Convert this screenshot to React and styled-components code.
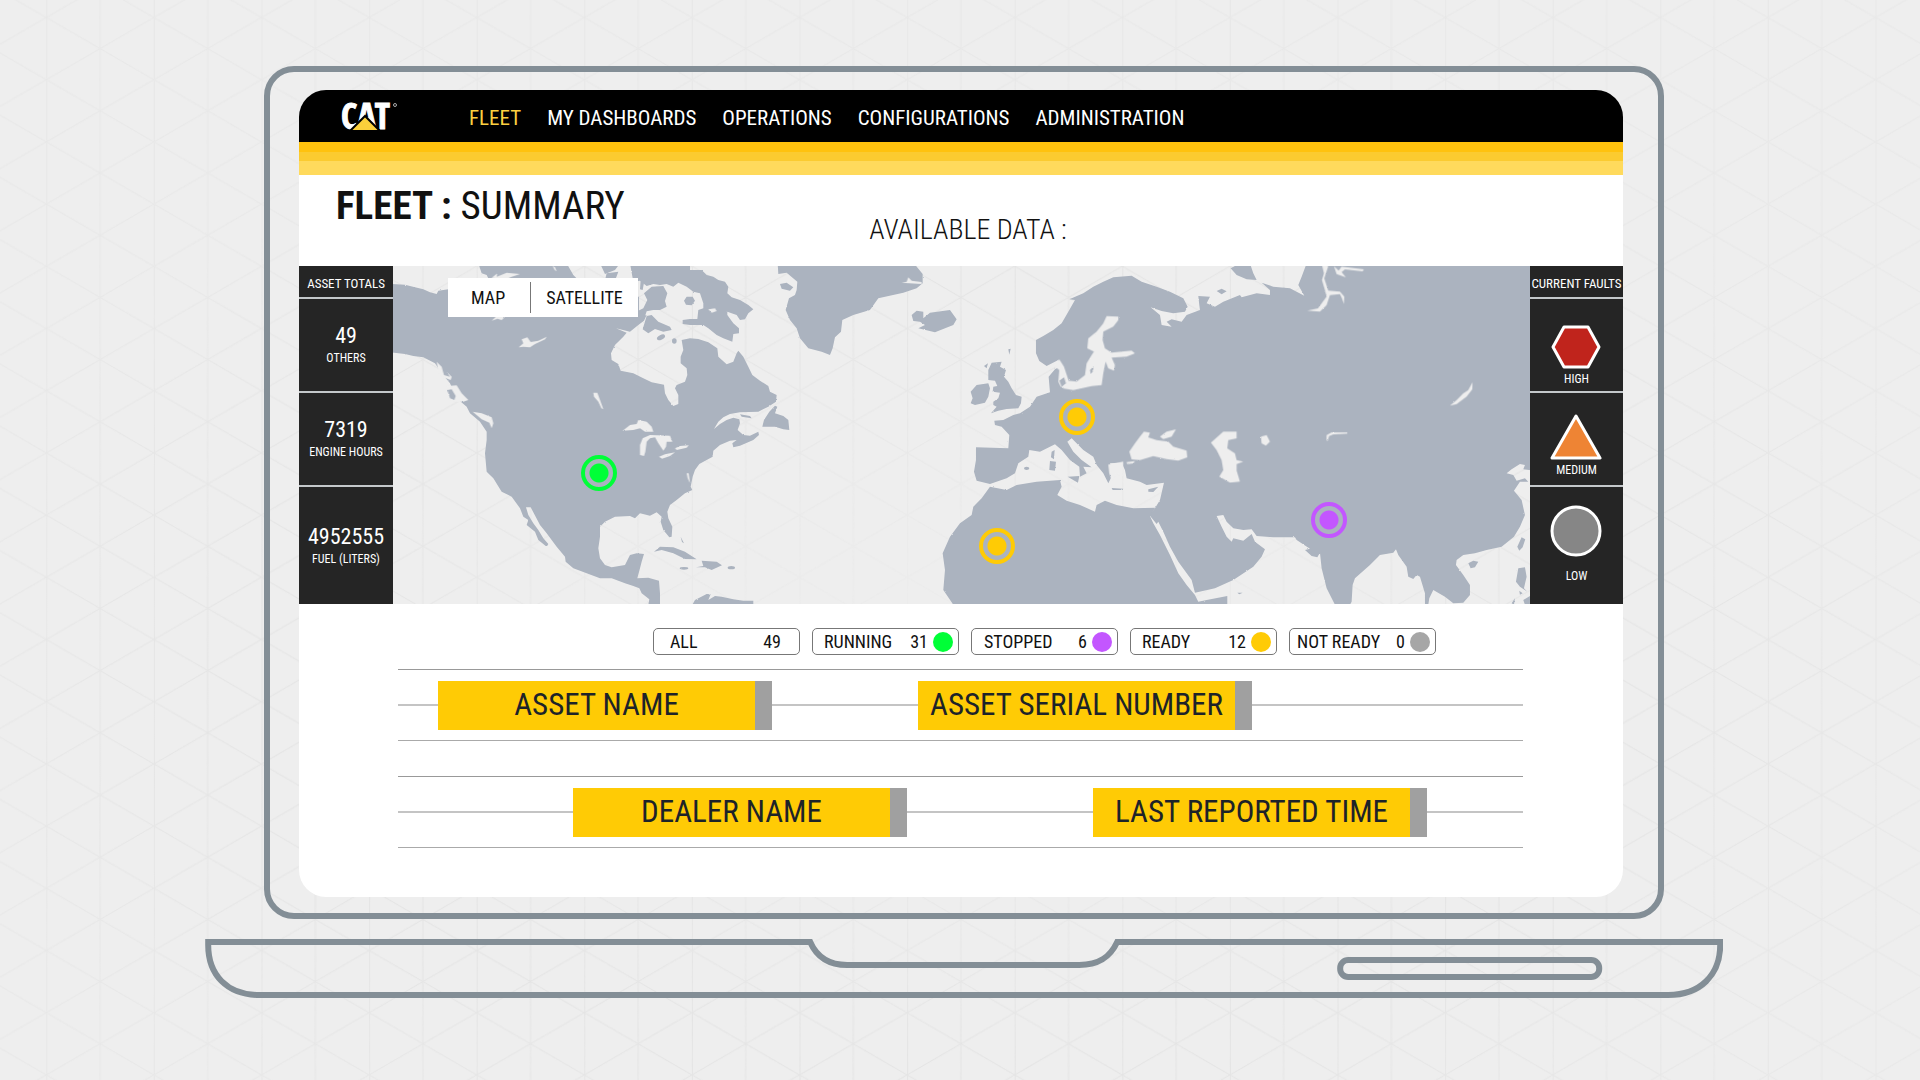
import React, { useState } from "react";
import styled, { createGlobalStyle } from "styled-components";

const steel = "#838e96";
const yellow = "#ffcb05";
const sea = "#eeeeee";
const land = "#abb3bf";

const GlobalStyle = createGlobalStyle`
  * { box-sizing: border-box; }
  body {
    margin: 0;
    background: ${sea};
    font-family: "Roboto Condensed", "Open Sans Condensed", Roboto, sans-serif;
    color: #111;
  }
  button { font: inherit; color: inherit; cursor: pointer; }
`;

const Stage = styled.div`
  display: grid;
  min-height: 100vh;
  > * { grid-area: 1 / 1; }
`;

const Backdrop = styled.svg`
  display: block;
  width: 100%;
  height: 100%;
`;

const Laptop = styled.div`
  width: 79.5%;
  margin: 0 auto;
  padding: 66px 0 40px 8px;
  display: flex;
  flex-direction: column;
  align-items: center;
  gap: 20px;
  min-width: 0;
`;

const Lid = styled.div`
  width: 92.2%;
  padding: 18px 35px 16px 29px;
  border: 6px solid ${steel};
  border-radius: 30px;
`;

const Screen = styled.div`
  display: flex;
  flex-direction: column;
  border-radius: 27px;
  overflow: hidden;
`;

const Base = styled.svg`
  display: block;
  width: 100%;
  height: auto;
`;

const TopBar = styled.header`
  display: flex;
  align-items: center;
  gap: 70px;
  height: 52px;
  padding: 0 40px;
  background: #000;
`;

const Logo = styled.svg`
  width: 60px;
  height: 52px;
  flex: none;
  overflow: visible;
  text {
    font-family: "Open Sans Condensed", "Roboto Condensed", sans-serif;
    font-weight: 700;
  }
`;

const Nav = styled.nav`
  display: flex;
  gap: 26px;
  padding-top: 4px;
`;

const NavLink = styled.a`
  font-size: 21px;
  line-height: 28px;
  text-decoration: none;
  white-space: nowrap;
  color: ${(p) => (p.$active ? "#fdd040" : "#fff")};
`;

const Stripe = styled.div`
  height: ${(p) => p.$size}px;
  background: ${(p) => p.$tone};
`;

const TitleBar = styled.div`
  display: grid;
  grid-template-columns: 1fr 1fr 1fr;
  height: 91px;
  padding: 0 39px 0 37px;
  background: #fff;
`;

const Title = styled.h1`
  margin: 0;
  padding-top: 8px;
  font-size: 39px;
  line-height: 46px;
  font-weight: 400;
  white-space: nowrap;
`;

const Subtitle = styled.h2`
  margin: 0;
  padding-top: 37px;
  padding-left: 16px;
  font-size: 28px;
  line-height: 36px;
  font-weight: 300;
  text-align: center;
  white-space: nowrap;
`;

const MapRow = styled.section`
  display: grid;
  grid-template-columns: 94px minmax(0, 1fr) 93px;
  height: 338px;
`;

const SidePanel = styled.aside`
  display: grid;
  grid-template-rows: 33px 94px 94px 1fr;
  background: #252525;
  color: #fff;
`;

const PanelTitle = styled.h3`
  margin: 0;
  padding-top: 4px;
  border-bottom: 2px solid #c4c8cb;
  font-size: 13px;
  line-height: 28px;
  font-weight: 400;
  text-align: center;
  white-space: nowrap;
`;

const Cell = styled.div`
  display: flex;
  flex-direction: column;
  align-items: center;
  justify-content: ${(p) => (p.$low ? "flex-end" : "center")};
  gap: ${(p) => p.$gap || 4}px;
  padding-bottom: ${(p) => p.$low || 0}px;
  &:not(:last-child) { border-bottom: 2px solid #c4c8cb; }
`;

const Figure = styled.strong`
  font-size: 22px;
  line-height: 22px;
  font-weight: 400;
`;

const Caption = styled.span`
  font-size: 12px;
  line-height: 14px;
`;

const FaultIcon = styled.svg`
  display: block;
  fill: ${(p) => p.$fill};
  stroke: #fff;
  stroke-width: 3;
  stroke-linejoin: round;
`;

const MapArea = styled.div`
  position: relative;
`;

const WorldMap = styled.svg`
  display: block;
  width: 100%;
  height: 100%;
`;

const MapToggle = styled.div`
  position: absolute;
  left: 55px;
  top: 12px;
  display: flex;
  height: 39px;
  padding: 4px 0;
  background: #fff;
`;

const ToggleButton = styled.button`
  padding: 0 15px;
  border: 0;
  background: none;
  font-size: 18px;
  line-height: 30px;
  &:first-child {
    padding: 0 25px 0 23px;
    border-right: 1px solid #777;
  }
`;

const Marker = styled.button`
  position: absolute;
  left: ${(p) => p.$x}%;
  top: ${(p) => p.$y}%;
  width: 36px;
  height: 36px;
  margin: -18px 0 0 -18px;
  padding: 5px;
  border: 4px solid ${(p) => p.$tone};
  border-radius: 50%;
  background: radial-gradient(circle, ${(p) => p.$tone} 9px, transparent 10px);
`;

const Lower = styled.section`
  padding: 24px 100px 49px 99px;
  background: #fff;
`;

const Filters = styled.div`
  display: flex;
  justify-content: center;
  gap: 12px;
  padding-left: 168px;
`;

const Filter = styled.button`
  display: flex;
  align-items: center;
  gap: 5px;
  width: 147px;
  height: 27px;
  padding: 0 ${(p) => (p.$dot ? 5 : 18)}px 0 ${(p) => p.$inset}px;
  border: 1px solid #777;
  border-radius: 5px;
  background: #fff;
  font-size: 18px;
  line-height: 24px;
  white-space: nowrap;
`;

const Count = styled.span`
  margin-left: auto;
`;

const Dot = styled.i`
  width: 20px;
  height: 20px;
  border-radius: 50%;
  background: ${(p) => p.$tone};
`;

const DataRow = styled.div`
  display: flex;
  align-items: center;
  gap: ${(p) => p.$gap}px;
  height: 72px;
  margin-top: ${(p) => p.$space}px;
  padding-left: ${(p) => p.$inset}px;
  border-top: 1px solid #999;
  border-bottom: 1px solid #aaa;
  background: linear-gradient(#c4c4c4, #c4c4c4) center / 100% 2px no-repeat;
`;

const DataBar = styled.div`
  flex: 0 1 334px;
  height: 49px;
  padding: 0 6px;
  border-right: 17px solid #a0a0a0;
  background: ${yellow};
  color: #1d2329;
  font-size: 31px;
  line-height: 47px;
  text-align: center;
  white-space: nowrap;
`;

function Triangles() {
  return (
    <Backdrop aria-hidden="true">
      <defs>
        <pattern id="tri" width="107.6" height="62.2" patternUnits="userSpaceOnUse" patternTransform="translate(1014.7 266.3)">
          <path d="M0 0L107.6 62.2M0 62.2L107.6 0M.5 0V62.2M53.8 0V62.2" fill="none" stroke="#e1e1e1" />
        </pattern>
        <radialGradient id="fade" cx="50%" cy="62%" r="55%">
          <stop offset="0" stopColor="#000" />
          <stop offset=".2" stopColor="#333" />
          <stop offset=".65" stopColor="#ccc" />
          <stop offset="1" stopColor="#777" />
        </radialGradient>
        <mask id="fadeMask">
          <rect width="100%" height="100%" fill="url(#fade)" />
        </mask>
      </defs>
      <rect width="100%" height="100%" fill="url(#tri)" mask="url(#fadeMask)" />
    </Backdrop>
  );
}

/* Drawn in thirds of a pixel; each group shifts its own region east. */
function World() {
  return (
    <WorldMap viewBox="309 18 3411 1014" preserveAspectRatio="none" role="img" aria-label="World map">
      <defs>
        <filter id="coast" x="0" y="0" width="100%" height="100%">
          <feTurbulence type="fractalNoise" baseFrequency="0.14" numOctaves="2" seed="4" />
          <feDisplacementMap in="SourceGraphic" scale="5" xChannelSelector="R" yChannelSelector="G" />
        </filter>
      </defs>
      <g fill={land} filter="url(#coast)">
        {/* North America */}
        <path d="M300 72L345 74 375 82 400 88 420 97 440 102 445 92 475 88 500 110 1047 110 1047 171 1070 165 1062 182 1045 195 1020 215 978 205 1010 218 1000 230 975 255 963 280 965 300 985 312 992 332 1030 340 1060 355 1085 367 1122 374 1125 400 1135 420 1150 438 1165 432 1165 405 1155 385 1160 375 1185 365 1192 345 1190 325 1172 310 1172 290 1180 270 1175 240 1200 235 1225 237 1255 247 1282 265 1285 290 1310 313 1330 305 1340 280 1345 272 1360 290 1375 320 1387 345 1410 362 1435 378 1440 395 1460 405 1458 425 1435 440 1405 455 1350 457 1320 462 1300 472 1285 485 1272 507 1290 492 1310 480 1330 473 1348 478 1350 490 1343 510 1360 525 1380 527 1405 515 1407 525 1390 540 1350 557 1330 562 1327 550 1340 540 1320 542 1290 555 1270 572 1268 590 1250 600 1228 612 1215 630 1208 650 1202 680 1207 690 1185 700 1160 720 1140 735 1132 755 1135 775 1147 800 1145 830 1138 832 1120 810 1112 785 1115 770 1100 757 1080 767 1050 760 1035 775 1020 768 975 770 945 785 930 800 930 830 925 865 930 895 945 915 965 922 1005 915 1020 885 1040 880 1062 882 1055 905 1050 925 1042 955 1075 953 1107 962 1110 1000 1110 1034 1075 1034 1078 1018 1055 1000 1048 985 1030 978 1005 970 965 955 930 955 890 940 850 925 827 905 825 890 800 860 770 820 750 795 737 770 722 742 708 742 715 765 730 790 745 810 760 835 775 852 770 860 745 840 735 815 710 795 715 780 700 770 690 745 665 710 635 695 610 655 590 635 585 580 590 540 590 515 570 485 540 460 530 440 500 415 480 370 455 340 435 310 400 292 370 288 345 282 300 277Z" />
        {/* Arctic islands */}
        <path d="M565 10H830L850 45 870 65 600 65 590 45 575 40ZM930 10H990L975 30 945 42ZM1020 10H1200V30L1215 30 1235 30 1250 45 1270 50 1285 60 1305 65 1315 80 1312 100 1325 112 1350 120 1375 135 1390 148 1375 160 1365 178 1350 180 1340 165 1312 155 1312 165 1330 190 1347 205 1347 220 1330 222 1327 245 1300 235 1280 225 1255 205 1240 195 1200 195 1178 192 1178 180 1200 177 1222 177 1225 150 1240 145 1240 130 1230 100 1210 95 1190 80 1165 68 1150 80 1130 72 1110 75 1090 72 1070 78 1050 62 1030 65Z" />
        <path d="M1085 80L1120 78 1132 100 1125 123 1130 140 1110 150 1090 150 1070 154 1064 172 1045 172V152L1060 145 1072 120 1062 100ZM1058 208L1070 168 1085 165 1105 185 1140 200 1145 210 1120 215 1095 207 1075 220ZM1182 122L1190 110 1208 110 1215 122 1205 136 1188 134ZM1052 60L1062 68 1058 90 1050 88ZM950 40L985 35 975 62 945 60Z" />
        <ellipse cx="1113" cy="232" rx="13" ry="7" transform="rotate(-25 1113 232)" />
        <ellipse cx="1153" cy="243" rx="7" ry="8" />
        {/* Newfoundland, Caribbean */}
        <path d="M1417 500L1422 480 1438 455 1455 437 1462 440 1455 460 1480 468 1495 480 1498 510 1480 508 1455 500 1430 500ZM1350 463L1380 468 1385 475 1355 470ZM1092 875L1110 860 1150 862 1185 875 1220 898 1185 897 1150 880 1115 870ZM1218 922L1240 918 1235 902 1280 905 1296 916 1265 930 1245 922ZM1172 830L1182 850 1176 846ZM1207 1034L1215 1020 1250 1002 1262 1003 1255 1020 1275 1008 1295 1010 1330 1018 1360 1022 1390 1022V1034Z" />
        <ellipse cx="1182" cy="925" rx="13" ry="4" />
        <ellipse cx="1324" cy="923" rx="11" ry="5" />
        {/* Greenland, Iceland */}
        <path d="M1463 10H1872L1898 42 1898 70 1880 85 1840 98 1765 115 1740 150 1690 165 1657 180 1653 215 1635 232 1628 265 1620 285 1595 275 1555 265 1530 235 1520 205 1500 180 1487 150 1497 115 1515 105 1520 90 1522 65 1490 38 1465 42ZM1470 72L1490 68 1510 82 1500 92 1475 86ZM1865 165L1880 152 1900 155 1900 175 1920 158 1980 150 2000 178 1990 195 1935 217 1885 205 1905 195 1890 185 1870 183Z" />
        <g transform="translate(1950 0)">
          {/* British Isles */}
          <path d="M145 330L155 308 185 305 180 320 198 330 192 350 205 365 215 385 228 405 245 410 243 430 235 445 200 447 175 452 153 460 170 440 160 435 160 425 175 415 180 398 158 395 160 380 172 378 165 362 145 360ZM92 430L98 415 92 395 110 375 145 370 150 385 145 410 135 428 105 435ZM132 318L144 310 140 325ZM205 268L212 266 208 284Z" />
          {/* Eurasia */}
          <path d="M108 562L205 565 208 525 185 500 165 495 163 482 190 480 220 465 240 460 270 440 290 410 330 397 326 350 345 328 357 320 355 300 320 318 298 303 288 280 288 240 310 228 340 210 365 190 385 155 405 120 388 118 430 100 460 80 490 65 520 52 575 47 605 65 650 80 690 95 730 115 743 140 735 155 700 160 665 153 632 142 660 165 665 195 695 200 680 185 695 178 725 185 740 165 780 150 778 135 775 108 810 110 800 130 825 140 850 125 900 105 905 112 950 100 990 105 990 90 965 68 1000 80 1050 85 1093 107 1075 75 1085 50 1100 10H1780V632L1750 628 1755 615 1740 612 1715 628 1700 640 1720 645 1730 662 1755 655 1765 665 1740 665 1722 692 1745 720 1755 765 1740 800 1722 830 1685 860 1640 870 1605 880 1570 885 1550 900 1548 915 1570 945 1590 975 1590 1005 1570 1028 1540 1030 1515 1010 1480 990 1468 1015 1465 1034 1455 1034 1455 1000 1440 950 1430 945 1420 957 1405 950 1400 920 1375 885 1368 868 1360 878 1320 885 1290 915 1245 955 1238 975 1235 1025 1230 1034 1185 1034 1160 985 1145 925 1140 878 1132 892 1115 888 1095 870 1110 866 1070 840 1065 832 1000 832 950 828 935 808 910 810 880 805 860 785 850 765 830 768 845 800 860 830 875 845 880 835 910 842 935 822 945 845 975 868 965 890 940 920 880 960 825 985 765 998 755 960 715 905 690 860 670 815 655 785 650 792 628 765 645 745 660 720 672 668 620 675 600 665 560 655 555 630 545 608 510 610 520 640 505 670 490 640 470 615 460 590 430 570 395 535 382 545 400 575 425 600 455 622 430 620 440 640 420 650 418 620 390 600 365 570 345 553 300 575 268 570 265 590 235 610 225 640 200 655 150 672 110 662 102 635 108 600Z" />
          {/* Africa */}
          <path d="M150 680L200 690 230 675 290 665 360 660 365 680 352 705 380 722 420 735 465 755 470 735 495 722 530 735 580 745 646 743 630 768 640 790 660 825 690 885 715 940 740 975 765 1005 775 1025 800 1020 862 1008V1034H40L10 990 15 930 8 880 30 830 60 790 95 765 100 740 125 715Z" />
          {/* Mediterranean and northern islands */}
          <path d="M383 650L418 648 414 668ZM330 603L348 605 345 632 328 630ZM335 575L344 570 342 598 333 592ZM515 684L550 686 548 690 518 690ZM625 688L655 680 640 696 625 695ZM872 25L900 10H930L940 40 950 60 920 58 890 45ZM830 93L845 86 860 94 845 103ZM892 998L908 998 898 1003Z" />
          <ellipse cx="260" cy="625" rx="8" ry="5" />
          {/* Taiwan, Hainan, Philippines */}
          <path d="M1732 860L1745 832 1756 838 1748 862 1738 872ZM1585 910L1600 902 1615 905 1605 922 1592 925ZM1735 925L1755 922 1760 950 1752 985 1762 995 1740 980 1728 965ZM1715 1030L1725 1015 1722 1034ZM1750 1020L1770 1008V1034H1755ZM1738 992L1748 1000 1740 1004Z" />
        </g>
      </g>
      <g fill={sea} filter="url(#coast)">
        {/* North American lakes and inlets */}
        <path d="M605 53L622 40 620 50 650 38 690 42 665 50 650 56ZM788 18L795 22 800 34 794 30ZM605 182L620 168 645 170 635 180 622 176ZM686 262L700 250 695 238 712 232 722 246 745 242 770 230 765 238 735 252 720 262 700 260ZM910 398L922 398 930 420 940 448 934 445 925 425 912 410ZM998 512L1020 495 1040 492 1045 480 1070 485 1085 500 1090 515 1065 515 1050 505 1030 510ZM1050 585V555L1058 535 1080 525 1140 527 1147 545 1130 545 1128 560 1120 572 1105 550 1095 532 1080 535 1070 545 1066 575 1062 588ZM1107 590L1125 583 1155 577 1140 588 1116 596ZM1155 565L1170 558 1196 556 1190 563 1160 570ZM1190 640L1196 640 1200 670 1193 655ZM1255 148L1275 145 1280 153 1265 158Z" />
        <path d="M470 378L500 376 515 400 535 420 520 425 500 425 478 420ZM440 305L455 320 462 345 480 350 470 335 485 350 482 360 460 352 445 335ZM548 455L575 460 605 472 610 490 605 505 598 488 575 478Z" />
        <path d="M1835 68L1850 65 1855 52 1865 62 1895 66 1895 72 1860 70Z" />
        <g transform="translate(1950 0)">
          {/* Baltic and Kattegat */}
          <path d="M490 190L500 168 535 170 535 180 520 200 490 215 488 240 495 265 515 278 575 272 585 280 560 290 515 293 525 315 522 332 505 325 497 305 490 340 485 375 455 378 400 390 368 385 385 362 410 365 435 345 440 310 455 285 462 275 442 265 445 235 470 215ZM340 315L358 298 372 320 386 362 378 384 362 380 355 365 358 330Z" />
          {/* Black Sea, Azov, Marmara */}
          <path d="M568 575L585 550 600 530 612 515 630 518 625 532 650 540 685 545 700 560 740 572 742 592 715 602 680 597 640 588 600 600 575 598ZM660 530L680 515 708 508 695 530 670 537ZM560 606L585 603 580 610 562 612ZM505 614L550 605 548 650 530 640 515 660 508 640Z" />
          {/* Caspian, Aral, Balkhash, Baikal */}
          <path d="M813 548L850 515 890 515 890 535 865 540 862 565 885 580 890 600 910 605 890 612 890 632 900 665 870 668 838 650 850 630 845 600 830 570ZM963 530L980 525 990 545 978 557 965 550ZM1160 542L1160 525 1175 517 1222 517 1222 521 1180 523 1167 528 1164 542ZM1530 437L1550 420 1570 400 1585 390 1598 366 1597 388 1580 410 1550 432Z" />
          {/* Ob and Yenisei */}
          <path d="M1145 10L1165 18 1153 55 1165 92 1200 95 1213 110 1212 132 1206 115 1200 102 1170 105 1160 135 1140 155 1102 152 1134 145 1160 110 1155 90 1146 60 1152 40ZM1182 18L1196 32 1205 20 1272 28 1268 34 1215 28 1205 36 1218 52 1190 42Z" />
        </g>
      </g>
      <g fill={land} filter="url(#coast)">
        <path d="M472 390L485 388 497 408 493 420 480 415ZM2308 362L2322 352 2328 370 2315 380ZM2400 330L2412 318 2408 335 2402 342Z" />
      </g>
    </WorldMap>
  );
}

const links = ["FLEET", "MY DASHBOARDS", "OPERATIONS", "CONFIGURATIONS", "ADMINISTRATION"];

const totals = [
  { value: "49", label: "OTHERS" },
  { value: "7319", label: "ENGINE HOURS" },
  { value: "4952555", label: "FUEL (LITERS)" },
];

const markers = [
  { name: "Running, North America", x: 18.1, y: 61.3, tone: "#00ff37" },
  { name: "Ready, Europe", x: 60.2, y: 44.7, tone: yellow },
  { name: "Ready, Africa", x: 53.1, y: 82.8, tone: yellow },
  { name: "Stopped, Asia", x: 82.3, y: 75, tone: "#c356ff" },
];

const filters = [
  { label: "ALL", count: 49, inset: 16 },
  { label: "RUNNING", count: 31, inset: 11, tone: "#00ff37" },
  { label: "STOPPED", count: 6, inset: 12, tone: "#c356ff" },
  { label: "READY", count: 12, inset: 11, tone: yellow },
  { label: "NOT READY", count: 0, inset: 7, tone: "#a6a6a6" },
];

export default function App() {
  const [view, setView] = useState("MAP");
  return (
    <>
      <GlobalStyle />
      <Stage>
        <Triangles />
        <Laptop>
          <Lid>
            <Screen>
              <TopBar>
                <Logo viewBox="0 0 60 52" role="img" aria-label="CAT">
                  <text x="2" y="39" fontSize="35" fill="#fff" stroke="#fff" strokeWidth="1">CAT</text>
                  <path d="M11 41L26 26 41 41Z" fill="#fbd03b" stroke="#000" strokeWidth="2" />
                  <circle cx="56" cy="15" r="1.5" fill="none" stroke="#aaa" strokeWidth="1" />
                </Logo>
                <Nav>
                  {links.map((l, i) => (
                    <NavLink key={l} href="#" $active={i === 0}>{l}</NavLink>
                  ))}
                </Nav>
              </TopBar>
              <Stripe $size={10} $tone="#ffc20e" />
              <Stripe $size={9} $tone="#fbcb30" />
              <Stripe $size={14} $tone="#ffda5c" />
              <TitleBar>
                <Title><b>FLEET :</b> SUMMARY</Title>
                <Subtitle>AVAILABLE DATA :</Subtitle>
              </TitleBar>
              <MapRow>
                <SidePanel>
                  <PanelTitle>ASSET TOTALS</PanelTitle>
                  {totals.map((t) => (
                    <Cell key={t.label}>
                      <Figure>{t.value}</Figure>
                      <Caption>{t.label}</Caption>
                    </Cell>
                  ))}
                </SidePanel>
                <MapArea>
                  <World />
                  <MapToggle>
                    {["MAP", "SATELLITE"].map((v) => (
                      <ToggleButton key={v} type="button" aria-pressed={view === v} onClick={() => setView(v)}>{v}</ToggleButton>
                    ))}
                  </MapToggle>
                  {markers.map((m) => (
                    <Marker key={m.name} type="button" aria-label={m.name} $x={m.x} $y={m.y} $tone={m.tone} />
                  ))}
                </MapArea>
                <SidePanel>
                  <PanelTitle>CURRENT FAULTS</PanelTitle>
                  <Cell $low={5} $gap={3}>
                    <FaultIcon width="50" height="44" viewBox="0 0 50 44" $fill="#c0241c">
                      <path d="M13 2H37L48 22 37 42H13L2 22Z" />
                    </FaultIcon>
                    <Caption>HIGH</Caption>
                  </Cell>
                  <Cell $low={8} $gap={3}>
                    <FaultIcon width="52" height="46" viewBox="0 0 52 46" $fill="#ee8434">
                      <path d="M26 2L50 44H2Z" />
                    </FaultIcon>
                    <Caption>MEDIUM</Caption>
                  </Cell>
                  <Cell $low={21} $gap={12}>
                    <FaultIcon width="52" height="52" viewBox="0 0 52 52" $fill="#868686">
                      <circle cx="26" cy="26" r="24" />
                    </FaultIcon>
                    <Caption>LOW</Caption>
                  </Cell>
                </SidePanel>
              </MapRow>
              <Lower>
                <Filters>
                  {filters.map((f) => (
                    <Filter key={f.label} type="button" $inset={f.inset} $dot={f.tone}>
                      {f.label}
                      <Count>{f.count}</Count>
                      {f.tone && <Dot $tone={f.tone} />}
                    </Filter>
                  ))}
                </Filters>
                <DataRow $space={14} $inset={40} $gap={146}>
                  <DataBar>ASSET NAME</DataBar>
                  <DataBar>ASSET SERIAL NUMBER</DataBar>
                </DataRow>
                <DataRow $space={35} $inset={175} $gap={186}>
                  <DataBar>DEALER NAME</DataBar>
                  <DataBar>LAST REPORTED TIME</DataBar>
                </DataRow>
              </Lower>
            </Screen>
          </Lid>
          <Base viewBox="0 0 1518 60" fill="none" stroke={steel} strokeWidth="6" aria-hidden="true">
            <path d="M3 3H605C612 19 624 26 642 26H874C894 26 905 18 912 3H1515V6C1515 36 1495 56 1463 56H54C22 56 3 36 3 6Z" />
            <rect x="1135" y="21" width="259" height="17" rx="8" />
          </Base>
        </Laptop>
      </Stage>
    </>
  );
}
